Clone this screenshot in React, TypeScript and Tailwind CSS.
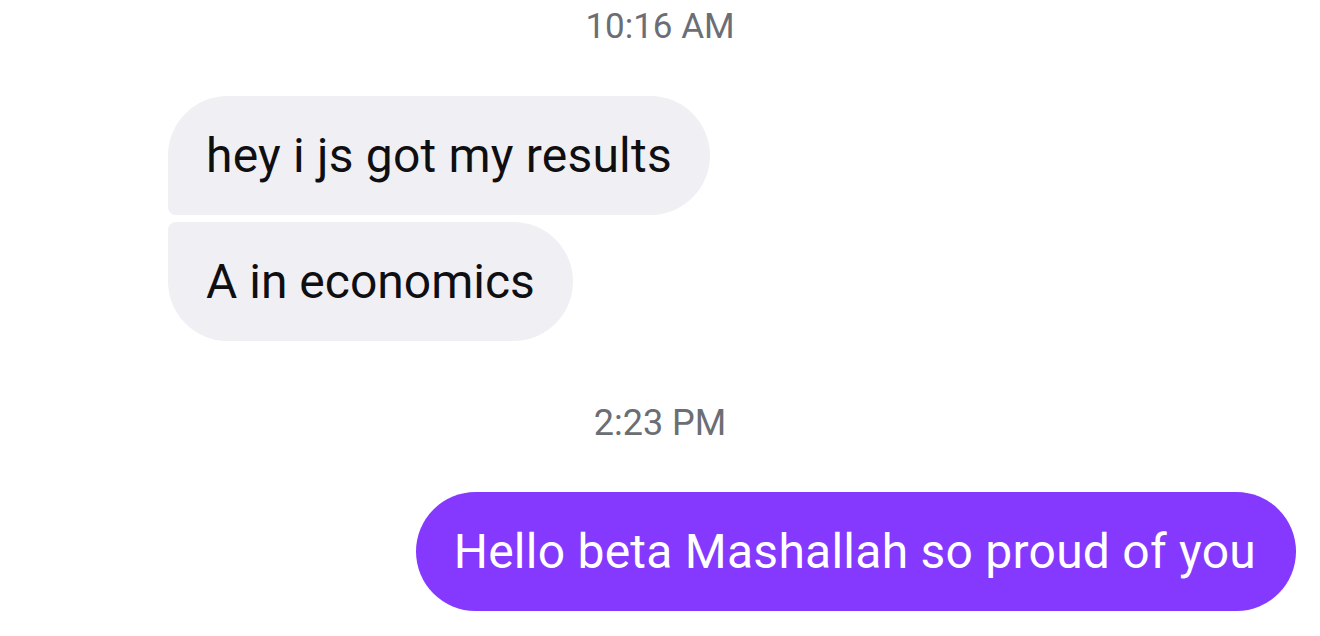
export default function App() {
  return (
    <div className="flex h-[636px] w-[1320px] flex-col overflow-hidden bg-white pt-[7px] font-['Roboto','Inter',sans-serif]">
      <div className="flex h-[40px] items-center justify-center text-[35px] text-[#6b6e74]">10:16 AM</div>

      <div className="mt-[49px] flex flex-col items-start gap-[7px] pl-[168px]">
        <div className="flex h-[119px] items-center rounded-l-[8px] rounded-r-[60px] rounded-tl-[60px] bg-[#f0f0f4] px-[38px] text-[48px] tracking-[0.2px] text-[#0f0f12]">
          hey i js got my results
        </div>
        <div className="flex h-[119px] items-center rounded-r-[60px] rounded-l-[8px] rounded-bl-[60px] bg-[#f0f0f4] px-[38px] text-[48px] text-[#0f0f12]">
          A in economics
        </div>
      </div>

      <div className="mt-[62px] flex h-[40px] items-center justify-center text-[36px] text-[#6b6e74]">2:23 PM</div>

      <div className="mt-[49px] flex justify-end pr-[24px]">
        <div className="flex h-[119px] items-center rounded-full bg-[#8538fe] pl-[38px] pr-[40px] text-[48px] tracking-[0.25px] text-white">
          Hello beta Mashallah so proud of you
        </div>
      </div>
    </div>
  );
}
